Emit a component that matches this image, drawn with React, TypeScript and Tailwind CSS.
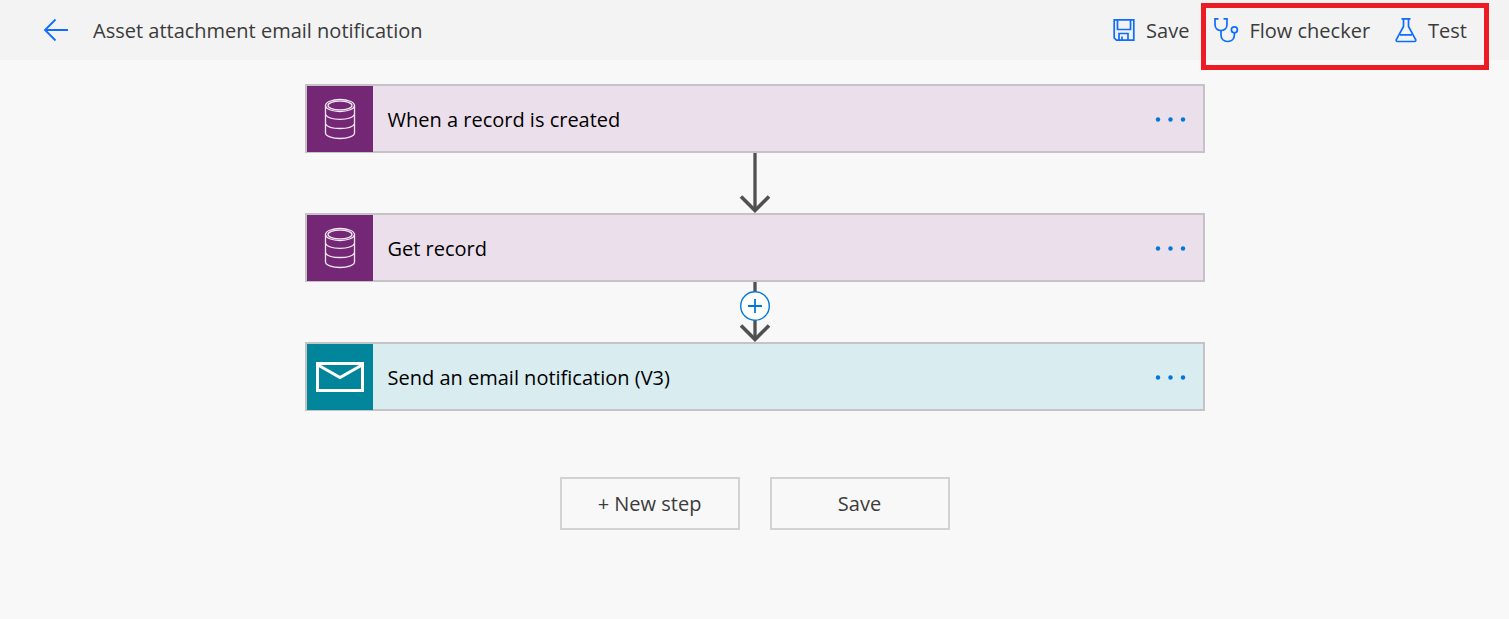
import type { ReactNode } from 'react';

type Step = {
  title: string;
  kind: 'database' | 'mail';
};

const steps: Step[] = [
  { title: 'When a record is created', kind: 'database' },
  { title: 'Get record', kind: 'database' },
  { title: 'Send an email notification (V3)', kind: 'mail' },
];

function BackIcon() {
  return (
    <svg width="26" height="24" viewBox="0 0 26 24" fill="none" stroke="#0f6cff" strokeWidth="1.8" aria-hidden="true">
      <path d="M25 12H2M12.5 1.500L2 12l10.500 10.500" />
    </svg>
  );
}

function SaveIcon() {
  return (
    <svg width="24" height="24" viewBox="0 0 24 24" fill="none" stroke="#0f6cff" strokeWidth="1.7" aria-hidden="true">
      <path d="M2.200 1.800h19.600v20.400H4.500L2.200 20z" />
      <path d="M5.500 2v9.500h13V2" />
      <path d="M7 22v-6.500h9V22M10 22v-3.500" />
    </svg>
  );
}

function StethoscopeIcon() {
  return (
    <svg width="26" height="26" viewBox="0 0 26 26" fill="none" stroke="#0f6cff" strokeWidth="1.700" aria-hidden="true">
      <path d="M5.500 1.800H2V7.500c0 3.500 2.400 6 6 6s6-2.500 6-6V1.800h-3.500" />
      <path d="M8 13.500v4.500c0 4 2.700 6.500 6.700 6.500 4 0 6.700-2.500 6.700-6.500v-2" />
      <circle cx="21.400" cy="12.800" r="3" />
    </svg>
  );
}

function FlaskIcon() {
  return (
    <svg width="24" height="26" viewBox="0 0 24 26" fill="none" stroke="#0f6cff" strokeWidth="1.700" aria-hidden="true">
      <path d="M7.500 1.800h9M9.500 2v7.500L2.500 22.300c-.7 1.200-.2 2.200 1.200 2.200h16.600c1.400 0 1.900-1 1.200-2.200L14.500 9.500V2M6 17.800h12" />
    </svg>
  );
}

function DatabaseIcon() {
  return (
    <svg width="32" height="42" viewBox="0 0 32 42" fill="none" stroke="#f3e8f3" strokeWidth="1.300" aria-hidden="true">
      <ellipse cx="16" cy="7.500" rx="14.500" ry="6" />
      <ellipse cx="16" cy="7.500" rx="12" ry="4.300" />
      <path d="M1.500 7.500V35c0 3 6.500 5.500 14.500 5.500S30.500 38 30.500 35V7.500" />
      <path d="M1.500 16.500c1.500 3 7 4.800 14.500 4.800s13-1.800 14.500-4.800M1.500 26c1.500 2.800 7 4.500 14.500 4.500s13-1.700 14.500-4.500" />
    </svg>
  );
}

function MailIcon() {
  return (
    <svg width="48" height="30" viewBox="0 0 48 30" fill="none" stroke="#fff" strokeWidth="3" aria-hidden="true">
      <path d="M1.500 1.500h45v27h-45z" />
      <path d="M2 3l22 12.500L46 3" />
    </svg>
  );
}

function HeaderButton({ icon, children }: { icon: ReactNode; children: ReactNode }) {
  return (
    <button type="button" className="flex items-center gap-2.5 whitespace-nowrap">
      {icon}
      <span className="pt-0.5">{children}</span>
    </button>
  );
}

function StepCard({ step }: { step: Step }) {
  const isMail = step.kind === 'mail';
  return (
    <article
      className={`flex h-[69px] w-full items-stretch border-2 border-[#c6c3c6] ${isMail ? 'bg-[#d9ecf0]' : 'bg-[#ecdfec]'}`}
    >
      <div
        className={`-mb-px flex w-[66px] shrink-0 items-center justify-center ${isMail ? 'bg-[#00859b]' : 'bg-[#742774]'}`}
      >
        {isMail ? <MailIcon /> : <DatabaseIcon />}
      </div>
      <h2 className="flex flex-1 items-center pt-0.5 pl-[15px] text-black">{step.title}</h2>
      <button type="button" aria-label={`Menu for ${step.title}`} className="px-4">
        <svg width="32" height="6" viewBox="0 0 32 6" fill="#0078d7" aria-hidden="true">
          <circle cx="3" cy="3.500" r="2.200" />
          <circle cx="15.500" cy="3.500" r="2.200" />
          <circle cx="28" cy="3.500" r="2.200" />
        </svg>
      </button>
    </article>
  );
}

function Connector({ insertable }: { insertable: boolean }) {
  return (
    <div className="relative flex h-[60px] justify-center">
      <svg width="32" height="60" viewBox="0 0 32 60" fill="none" stroke="#505050" aria-hidden="true">
        <path d="M16 0v58" strokeWidth="3.300" />
        <path d="M2 43.500l14 14 14-14" strokeWidth="3.600" />
      </svg>
      {insertable && (
        <button type="button" aria-label="Insert a new step" className="absolute top-[9px]">
          <svg width="30" height="30" viewBox="0 0 30 30" stroke="#0078d7" aria-hidden="true">
            <circle cx="15" cy="15" r="14.300" fill="#fff" strokeWidth="1.400" />
            <path d="M8 15h14M15 8v14" strokeWidth="1.800" />
          </svg>
        </button>
      )}
    </div>
  );
}

export default function App() {
  return (
    <div className="min-h-screen bg-[#f8f8f8] font-['Open_Sans','Noto_Sans',sans-serif] text-[20px] leading-7 text-[#3b3b3b]">
      <header className="flex h-[60px] items-center justify-between bg-[#f3f3f3] pr-[42px] pl-[43px]">
        <div className="flex items-center gap-6">
          <a href="#flows" aria-label="Back">
            <BackIcon />
          </a>
          <h1 className="pt-0.5">Asset attachment email notification</h1>
        </div>
        <nav aria-label="Flow actions" className="flex items-center gap-6">
          <HeaderButton icon={<SaveIcon />}>Save</HeaderButton>
          <div className="relative flex items-center gap-6">
            <HeaderButton icon={<StethoscopeIcon />}>Flow checker</HeaderButton>
            <HeaderButton icon={<FlaskIcon />}>Test</HeaderButton>
            <div className="pointer-events-none absolute -top-3 -right-[22px] -bottom-[25px] -left-3 border-[5px] border-[#ed1c24]" />
          </div>
        </nav>
      </header>
      <main className="flex flex-col items-center px-6 pt-6 pb-10">
        <section aria-label="Flow steps" className="w-full max-w-[900px]">
          {steps.map((step, index) => (
            <div key={step.title}>
              {index > 0 && <Connector insertable={index === 2} />}
              <StepCard step={step} />
            </div>
          ))}
        </section>
        <div className="mt-[66px] flex gap-[30px]">
          <button type="button" className="h-[53px] w-[180px] border-2 border-[#d2d2d2]">
            + New step
          </button>
          <button type="button" className="h-[53px] w-[180px] border-2 border-[#d2d2d2]">
            Save
          </button>
        </div>
      </main>
    </div>
  );
}
